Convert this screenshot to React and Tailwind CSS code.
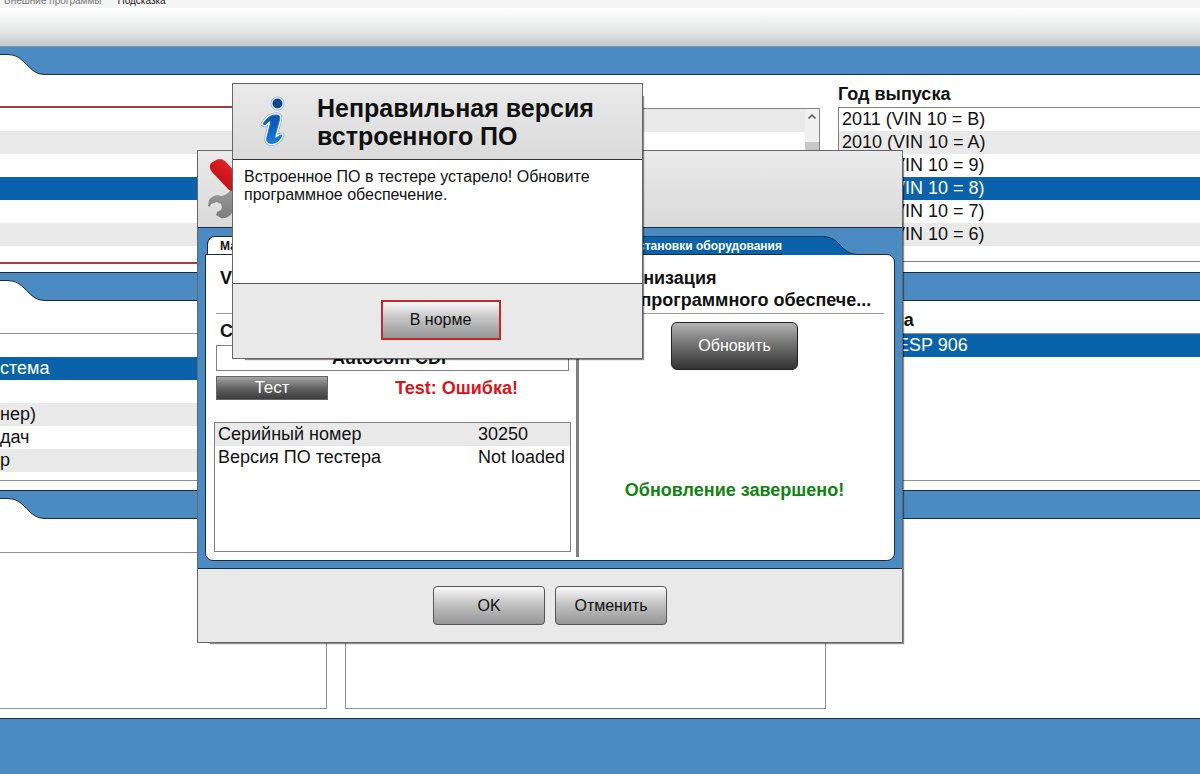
import clsx from "clsx";

const YEARS = [
  "2011 (VIN 10 = B)",
  "2010 (VIN 10 = A)",
  "2009 (VIN 10 = 9)",
  "2008 (VIN 10 = 8)",
  "2007 (VIN 10 = 7)",
  "2006 (VIN 10 = 6)",
];

const SYSTEMS = ["", "стема", "", "нер)", "дач", "р"];

const TESTER_INFO = [
  ["Серийный номер", "30250"],
  ["Версия ПО тестера", "Not loaded"],
];

// Blue strip between sections, with the white folder tab rising into it on the left
function TabBand({ first }) {
  return (
    <div
      className={clsx(
        "flex items-end border-b border-[#1d2b3a] bg-[#4c8bc1]",
        first ? "h-7" : "h-[29px] border-t"
      )}
    >
      <svg width="46" height="21" viewBox="0 0 46 21" className="-mb-px block">
        <path d="M0 .5H8C26 .5 27 20.500 45 20.500H46V21H0Z" fill="#fff" />
        <path d="M0 .5H8C26 .5 27 20.500 45 20.500H46" fill="none" stroke="#1d2b3a" />
      </svg>
    </div>
  );
}

function List({ items, selected, className }) {
  return (
    <ul className={clsx("overflow-hidden bg-white text-[18px] leading-[23px]", className)}>
      {items.map((item, i) => (
        <li
          key={i}
          className={clsx(
            "h-[23px] whitespace-nowrap",
            i === selected ? "bg-[#0a63aa] text-white" : i % 2 === 1 && "bg-[#e9e9e9]"
          )}
        >
          {item}
        </li>
      ))}
    </ul>
  );
}

function Button({ children, className }) {
  return (
    <button
      className={clsx(
        "bg-linear-to-b from-[#fafafa] via-[#c4c4c4] via-45% to-[#969696] text-[16px] text-[#111]",
        className
      )}
    >
      {children}
    </button>
  );
}

function InfoIcon() {
  const stem =
    "M5 29C8 24 12 20 18 20C22 20 22 22 21.500 25L17 41C16.500 43 17.500 43.500 19 42.500C21 41 22 40 24 40C22.500 45 18 48.500 14 48.500C9 48.500 8 45 9 42L12.500 28C13 25 11 25 7 30Z";
  return (
    <svg width="32" height="54" viewBox="0 0 32 54" aria-hidden="true">
      <defs>
        <linearGradient id="info" x1="0" y1="0" x2="0" y2="1">
          <stop offset="0" stopColor="#0d55a8" />
          <stop offset=".5" stopColor="#0f64c4" />
          <stop offset="1" stopColor="#1a80e4" />
        </linearGradient>
      </defs>
      <g stroke="#8fb0d0" strokeWidth="5" strokeLinejoin="round">
        <path d={stem} />
        <circle cx="19.500" cy="8.500" r="4.500" />
      </g>
      <g stroke="#f4faff" strokeWidth="3.500" strokeLinejoin="round">
        <path d={stem} />
        <circle cx="19.500" cy="8.500" r="4.500" />
      </g>
      <path d={stem} fill="url(#info)" stroke="#0f64c4" strokeWidth=".8" />
      <circle cx="19.500" cy="8.500" r="5" fill="#0b4790" />
    </svg>
  );
}

function ToolsIcon() {
  return (
    <svg width="60" height="62" viewBox="0 0 60 62" aria-hidden="true">
      <defs>
        <linearGradient id="handle" x1="0" y1="1" x2="1" y2="0">
          <stop offset="0" stopColor="#a80c10" />
          <stop offset=".5" stopColor="#d4181e" />
          <stop offset="1" stopColor="#e8383c" />
        </linearGradient>
        <linearGradient id="steel" x1="0" y1="0" x2="0" y2="1">
          <stop offset="0" stopColor="#b5b5b5" />
          <stop offset="1" stopColor="#7d7d7d" />
        </linearGradient>
      </defs>
      <path d="M30 28L48 47L52 56L44 51L26 32Z" fill="#8e8e8e" />
      <path
        d="M0 48L1 42C4 38 9 36 13 38C17 38 20 35 24 31L42 8C43 3 49 1 54 4L47 10L51 15L58 10C59 16 55 20 49 20L28 44C26 47 26 50 25 53C23 58 18 61 13 60L8 57L9 54L13 52C14 50 14 48 13 46L9 44L3 46L2 49Z"
        fill="url(#steel)"
      />
      <path
        d="M3 5L9 1.500Q13 0 17 3L38 25Q33 31 26 34L21 32L4 14Q0 9 3 5Z"
        fill="url(#handle)"
      />
    </svg>
  );
}

function Workspace() {
  return (
    <div className="flex min-h-screen flex-col bg-white">
      <nav className="flex h-2 items-end gap-4 overflow-hidden bg-[#f5f5f5] pl-1 text-[10px] leading-[14px]">
        <a href="#programs" className="text-[#777]">Внешние программы</a>
        <a href="#help" className="text-[#222]">Подсказка</a>
      </nav>
      <div className="h-[39px] border-b border-[#7d9ab5] bg-linear-to-b from-white via-[#e6e8e8] via-60% to-[#c6c6c6]" />

      <TabBand first />
      <section className="grid grid-cols-[327fr_475fr_362fr] gap-x-[18px] pt-2 pb-2">
        <List
          items={["", "", "", "", "", "", ""]}
          selected={3}
          className="mt-[23px] h-[158px] border-y-2 border-[#a8393e]"
        />
        <div className="mt-[25px] flex h-[154px] overflow-hidden border border-[#808080]">
          <List items={["", "", "", "", "", "", ""]} className="-mt-[23px] flex-1" />
          <div className="flex w-[14px] flex-col bg-[#f0f0f0]">
            <svg width="14" height="33" viewBox="0 0 14 33" aria-hidden="true">
              <path d="M3.500 9.500L7 6L10.500 9.500" fill="none" stroke="#555" strokeWidth="1.500" />
            </svg>
            <div className="h-12 bg-[#c8c8c8]" />
          </div>
        </div>
        <div>
          <h2 className="mb-[2px] text-[18px] leading-[22px] font-bold">Год выпуска</h2>
          <List
            items={YEARS}
            selected={3}
            className="h-[155px] border border-r-0 border-[#808080] [&>li]:pl-[3px]"
          />
        </div>
      </section>

      <TabBand />
      <section className="grid grid-cols-[327fr_475fr_362fr] gap-x-[18px] pt-2 pb-[9px]">
        <List items={SYSTEMS} selected={1} className="mt-6 h-[148px] border-y border-[#909090]" />
        <div className="mt-6 border border-[#909090]" />
        <div>
          <h2 className="mb-[2px] text-[18px] leading-[22px] font-bold">Система</h2>
          <List
            items={["Bosch ESP 906"]}
            selected={0}
            className="h-[148px] border border-r-0 border-[#909090] [&>li]:pl-[3px]"
          />
        </div>
      </section>

      <TabBand />
      <section className="grid grid-cols-[327fr_481fr_356fr] gap-x-[18px] pt-[33px] pb-[9px]">
        <div className="h-[157px] border border-l-0 border-[#909090]" />
        <div className="border border-[#909090]" />
      </section>

      <footer className="min-h-14 flex-1 border-t border-[#1d2b3a] bg-[#4c8bc1]" />
    </div>
  );
}

function HardwareDialog() {
  return (
    <div
      role="dialog"
      aria-label="Установки оборудования"
      className="absolute top-[150px] left-[197px] w-[706px] border border-[#666] bg-[#e9e9e9] shadow-[7px_7px_1px_-6px_rgba(0,0,0,0.45)]"
    >
      <div className="flex h-[76px] items-center bg-linear-to-b from-[#eaeaea] to-[#dadada] pl-[10px]">
        <ToolsIcon />
      </div>

      <div className="border-y border-[#1d2b3a] bg-[#4c8bc1] px-[7px] pt-2 pb-[7px]">
        <div className="flex h-[18px] pl-[2px] text-[12px] leading-4 font-bold">
          <button className="w-[180px] rounded-tl-lg border-t border-l border-[#1d2b3a] bg-white pl-3 text-left">
            Мастер
          </button>
          <button className="flex-1 border-t border-[#12385f] bg-[#0a63aa] text-right text-white">
            Установки оборудования
          </button>
          <svg width="76" height="19" viewBox="0 0 76 19" className="mr-[37px] block" aria-hidden="true">
            <path d="M0 .5H41C59 .5 58 18.500 76 18.500V19H0Z" fill="#0a63aa" />
            <path d="M0 .5H41C59 .5 58 18.500 76 18.500" fill="none" stroke="#12385f" />
          </svg>
        </div>
        <div className="flex h-[307px] rounded-b-lg rounded-tr-lg border border-[#1d2b3a] bg-white pb-[3px]">
          <div className="flex w-[373px] flex-col border-r-[3px] border-[#808080] pr-[5px] pl-2">
            <h3 className="mx-[2px] border-b border-[#999] pt-[11px] pb-[23px] pl-1 text-[18px] leading-6 font-bold">VCI</h3>
            <label htmlFor="com" className="mt-[3px] pl-[6px] text-[18px] leading-7 font-bold">
              COM
            </label>
            <input
              id="com"
              readOnly
              defaultValue="Autocom CDP"
              className="mx-[2px] h-[26px] border border-[#808080] text-center text-[18px] font-bold"
            />
            <div className="mx-[2px] mt-[5px] flex h-6 items-center">
              <button className="h-6 w-[112px] border border-[#666] bg-linear-to-b from-[#a5a5a5] via-[#646464] via-50% to-[#3c3c3c] text-[17px] leading-5 text-white">
                Тест
              </button>
              <p className="flex-1 pl-4 text-center text-[18px] font-bold text-[#d8141c]">Test: Ошибка!</p>
            </div>
            <div className="mt-[22px] h-[130px] border border-[#808080]">
              <table className="w-full text-[18px] leading-[23px]">
                <tbody>
                  {TESTER_INFO.map(([name, value]) => (
                    <tr key={name} className="odd:bg-[#e9e9e9]">
                      <th scope="row" className="w-[263px] pl-[3px] text-left font-normal">{name}</th>
                      <td className="whitespace-nowrap">{value}</td>
                    </tr>
                  ))}
                </tbody>
              </table>
            </div>
          </div>
          <div className="flex min-w-0 flex-1 flex-col items-center pr-[10px] pl-[6px]">
            <h3 className="w-full border-b border-[#999] pt-3 pb-[2px] text-[18px] leading-[22px] font-bold">
              Модернизация
              <br />
              <span className="whitespace-nowrap">микропрограммного обеспече...</span>
            </h3>
            <button className="mt-2 h-12 w-[127px] rounded-md border border-[#222] bg-linear-to-b from-[#b4b4b4] via-[#747474] via-45% to-[#333] text-[16px] text-white">
              Обновить
            </button>
            <p className="mt-[108px] text-[18px] leading-6 font-bold text-[#128212]">Обновление завершено!</p>
          </div>
        </div>
      </div>

      <div className="flex h-[73px] items-center justify-center gap-[10px]">
        <Button className="h-[39px] w-28 rounded border border-[#555]">OK</Button>
        <Button className="h-[39px] w-28 rounded border border-[#555]">Отменить</Button>
      </div>
    </div>
  );
}

function FirmwareMessage() {
  return (
    <div
      role="alertdialog"
      aria-labelledby="message-title"
      className="absolute top-[83px] left-[232px] w-[411px] border border-[#666] bg-[#e9e9e9] shadow-[7px_7px_1px_-6px_rgba(0,0,0,0.45)]"
    >
      <div className="flex h-[76px] items-center gap-[27px] border-b border-[#333] bg-linear-to-b from-[#eaeaea] to-[#dadada] pl-[25px]">
        <InfoIcon />
        <h1 id="message-title" className="text-[25px] leading-7 font-bold">
          Неправильная версия
          <br />
          встроенного ПО
        </h1>
      </div>
      <p className="h-[123px] bg-white px-[11px] pt-2 text-[16px] leading-[18px]">
        Встроенное ПО в тестере устарело! Обновите программное обеспечение.
      </p>
      <div className="flex h-[75px] items-center justify-center border-t border-[#555] pb-[2px] pl-[6px]">
        <Button className="h-10 w-[120px] border-2 border-[#c9282a]">В норме</Button>
      </div>
    </div>
  );
}

export default function App() {
  return (
    <div className="relative overflow-hidden font-['Liberation_Sans',Arial,sans-serif] text-[#111]">
      <Workspace />
      <HardwareDialog />
      <FirmwareMessage />
    </div>
  );
}
